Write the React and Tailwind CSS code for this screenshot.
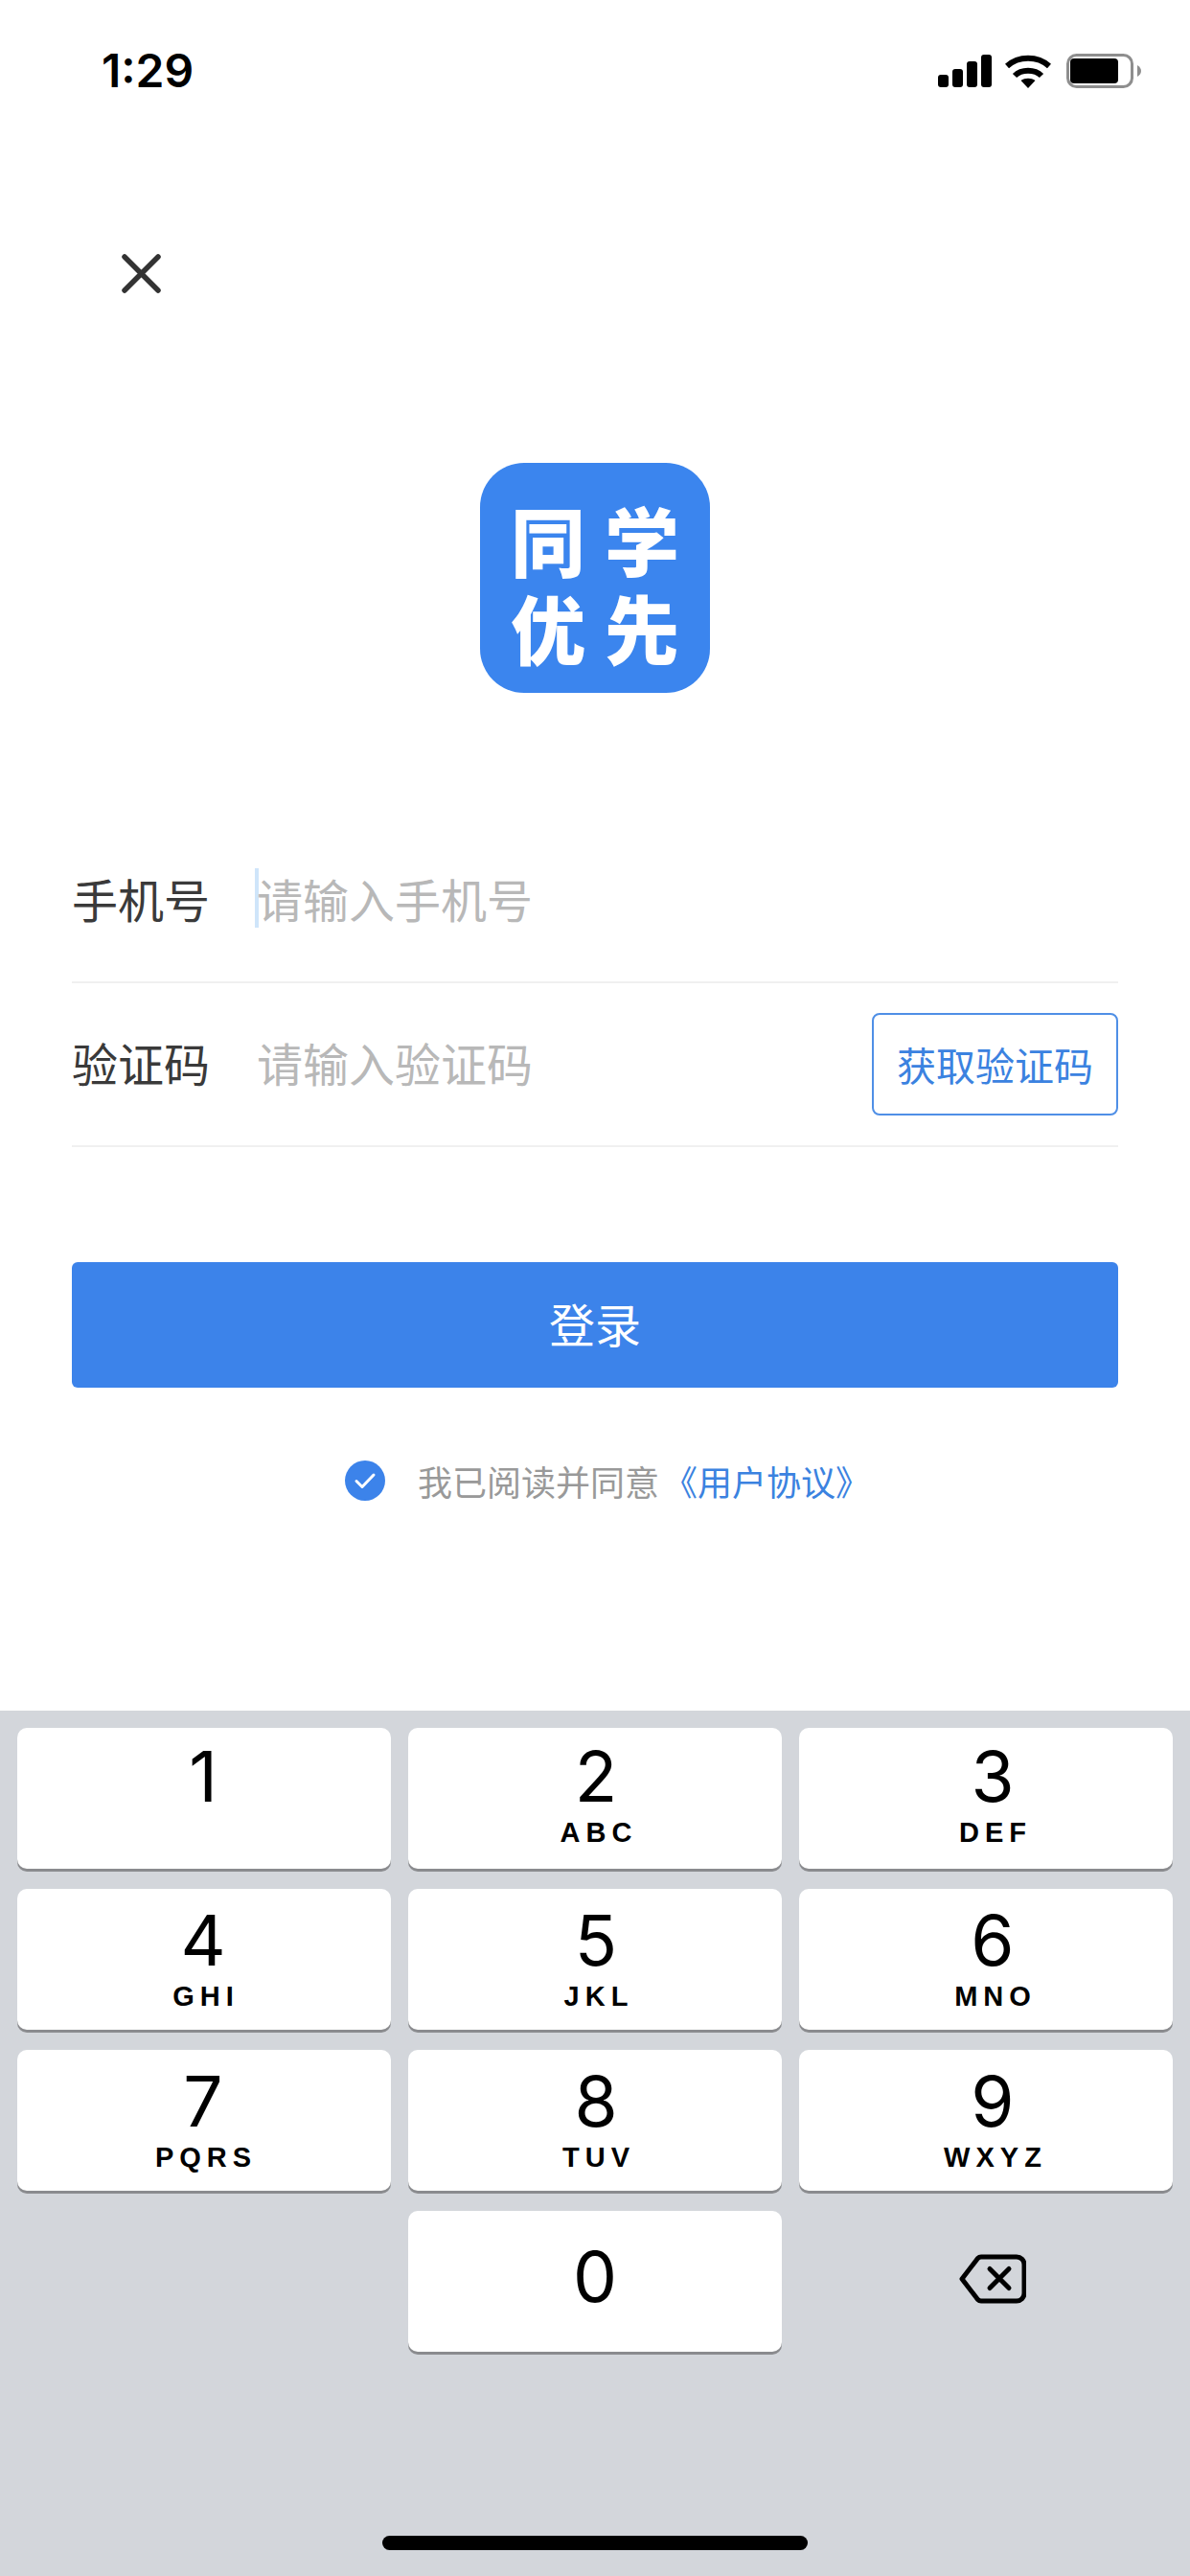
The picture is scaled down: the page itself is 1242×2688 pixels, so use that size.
const cjk = "font-['Noto_Sans_CJK_SC','Noto_Sans',sans-serif]";

const keys = [
  { digit: "1", letters: "", cls: "pt-[11px] pr-[2px]" },
  { digit: "2", letters: "ABC", cls: "pt-[11px] pl-[2px]" },
  { digit: "3", letters: "DEF", cls: "pt-[11px] pl-[14px]" },
  { digit: "4", letters: "GHI", cls: "pt-[14px] pr-[2px]" },
  { digit: "5", letters: "JKL", cls: "pt-[14px] pl-[2px]" },
  { digit: "6", letters: "MNO", cls: "pt-[14px] pl-[14px]" },
  { digit: "7", letters: "PQRS", cls: "pt-[14px] pr-[2px]" },
  { digit: "8", letters: "TUV", cls: "pt-[14px] pl-[2px]" },
  { digit: "9", letters: "WXYZ", cls: "pt-[14px] pl-[14px]" },
];

const StatusIcons = () => (
  <div className="flex items-center">
    {/* signal */}
    <svg width="56" height="36" viewBox="0 0 56 36">
      <rect x="0" y="22" width="11" height="13" rx="3" fill="#000" />
      <rect x="15" y="16" width="11" height="19" rx="3" fill="#000" />
      <rect x="30" y="8" width="11" height="27" rx="3" fill="#000" />
      <rect x="45" y="1" width="11" height="34" rx="3" fill="#000" />
    </svg>
    {/* wifi */}
    <svg className="ml-[14px]" width="48" height="36" viewBox="0 0 48 36" fill="none" stroke="#000" strokeWidth="6">
      <path d="M2 13C14 2 34 2 46 13" />
      <path d="M10 23C17 16 31 16 38 23" />
      <path d="M24 36 16.500 28C21 25 27 25 31.500 28Z" fill="#000" stroke="none" />
    </svg>
    {/* battery */}
    <svg className="ml-[16px]" width="78" height="36" viewBox="0 0 78 36">
      <rect x="1.500" y="1.500" width="67" height="33" rx="9" fill="none" stroke="#8e8e8e" strokeWidth="3" />
      <rect x="4" y="5" width="50" height="26" rx="4" fill="#000" />
      <path d="M74 12c2.500 1.500 4 3.500 4 6s-1.500 4.500-4 6z" fill="#8e8e8e" />
    </svg>
  </div>
);

const Key = ({ digit, letters, cls }) => (
  <div className={`h-[147px] bg-white rounded-[10px] shadow-[0_3px_0_#8a8b8e] flex flex-col items-center ${cls}`}>
    <span className="font-['Inter',sans-serif] text-[73px] leading-[80px] text-black">{digit}</span>
    {letters && (
      <span className="font-['Liberation_Sans',sans-serif] font-bold text-[29px] leading-[30px] tracking-[6px] pl-[6px] h-[30px] translate-y-[3px] text-black">
        {letters}
      </span>
    )}
  </div>
);

const App = () => {
  return (
    <div className="w-[1242px] h-[2688px] bg-white flex flex-col">
      {/* status bar */}
      <div className="h-[148px] flex items-center justify-between pl-[106px] pr-[51px]">
        <span className="font-['Inter',sans-serif] font-semibold text-[48px] text-black">1:29</span>
        <StatusIcons />
      </div>

      <button className="mt-[117px] ml-[127px] w-[41px] h-[41px]">
        <svg width="41" height="41" viewBox="0 0 41 41" stroke="#333" strokeWidth="5.500" strokeLinecap="round">
          <path d="M3 3 38 38M38 3 3 38" />
        </svg>
      </button>

      {/* logo */}
      <div className="mt-[177px] self-center w-[240px] h-[240px] rounded-[46px] bg-[#3b85ee] flex justify-center pt-[33px]">
        <div className={`${cjk} grid grid-cols-[98px_98px] auto-rows-[92px] text-white text-[78px] font-black text-center leading-[92px]`}>
          <span>同</span>
          <span>学</span>
          <span>优</span>
          <span>先</span>
        </div>
      </div>

      {/* form */}
      <div className={`${cjk} mt-[133px] mx-[75px] flex flex-col`}>
        <div className="h-[170px] pb-[6px] flex items-center border-b-2 border-[#f0f0f0]">
          <span className="w-[191px] text-[48px] text-[#3a3a3a]">手机号</span>
          <span className="w-[4px] h-[62px] bg-[#cfe5fa]"></span>
          <span className="-ml-[2px] text-[48px] text-[#b8b8b8]">请输入手机号</span>
        </div>
        <div className="h-[171px] flex items-center border-b-2 border-[#f0f0f0]">
          <span className="w-[193px] -translate-y-[3px] text-[48px] text-[#3a3a3a]">验证码</span>
          <span className="flex-1 -translate-y-[3px] text-[48px] text-[#b8b8b8]">请输入验证码</span>
          <button className="w-[257px] h-[107px] border-2 border-[#4f8fe6] rounded-[8px] text-[41px] text-[#3b82e0]">
            获取验证码
          </button>
        </div>

        <button className="mt-[120px] h-[131px] pb-[6px] bg-[#3c83ea] rounded-[6px] text-white text-[48px]">登录</button>

        <div className="mt-[76px] h-[42px] flex items-center pl-[285px]">
          <span className="w-[42px] h-[42px] rounded-full bg-[#3c83ea] flex items-center justify-center">
            <svg width="24" height="20" viewBox="0 0 24 20" fill="none" stroke="#fff" strokeWidth="3" strokeLinecap="round" strokeLinejoin="round">
              <path d="M3 10.500 9 16.500 21 4" />
            </svg>
          </span>
          <span className="ml-[34px] text-[36px] text-[#999]">
            我已阅读并同意<span className="ml-[4px] text-[#3b82e0]">《用户协议》</span>
          </span>
        </div>
      </div>

      {/* keypad */}
      <div className="mt-auto h-[903px] bg-[#d3d6db] px-[18px] pt-[18px] flex flex-col">
        <div className="grid grid-cols-3 gap-x-[18px] gap-y-[21px]">
          {keys.map((k) => (
            <Key key={k.digit} digit={k.digit} letters={k.letters} cls={k.cls} />
          ))}
          <div></div>
          <div className="h-[147px] bg-white rounded-[10px] shadow-[0_3px_0_#8a8b8e] flex justify-center pt-[29px]">
            <span className="font-['Inter',sans-serif] text-[73px] leading-[80px] text-black">0</span>
          </div>
          <div className="flex justify-center pt-[45px] pl-[14px]">
            <svg width="70" height="52" viewBox="0 0 70 52" fill="none" stroke="#000" strokeWidth="5" strokeLinejoin="round" strokeLinecap="round">
              <path d="M23 3H60a8 8 0 0 1 8 8V41a8 8 0 0 1-8 8H23a5 5 0 0 1-3.500-1.500L3 26 19.500 4.500A5 5 0 0 1 23 3Z" />
              <path d="M32 15.500 52 35.500M52 15.500 32 35.500" />
            </svg>
          </div>
        </div>
        <div className="mt-[192px] self-center w-[444px] h-[15px] rounded-full bg-black"></div>
      </div>
    </div>
  );
};

export default App;
